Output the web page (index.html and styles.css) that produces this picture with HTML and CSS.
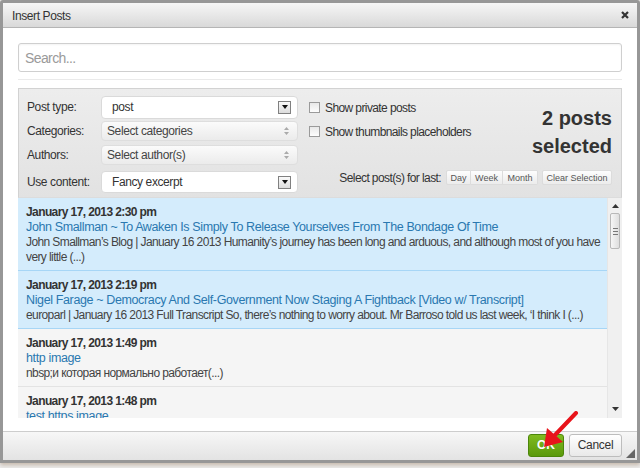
FILE: index.html
```html
<!DOCTYPE html>
<html lang="en">
<head>
  <meta charset="UTF-8">
  <title>Insert Posts</title>
  <link rel="stylesheet" href="styles.css">
</head>
<body>
  <div class="dialog">
    <div class="titlebar">
      <span class="title">Insert Posts</span>
      <svg class="close" width="8" height="8" viewBox="0 0 8 8"><path d="M1 1 L7 7 M7 1 L1 7" stroke="#333" stroke-width="2.2"/></svg>
    </div>

    <div class="content">
      <input class="search" type="text" placeholder="Search...">
      <div class="divider"></div>

      <!-- 筛选面板 -->
      <div class="filters">
        <div class="fields">
          <div class="field">
            <label>Post type:</label>
            <div class="select select-native">
              <span>post</span>
              <span class="drop-btn"><svg width="6" height="4" viewBox="0 0 6 4"><path d="M0 0 H6 L3 4 Z" fill="#111"/></svg></span>
            </div>
          </div>
          <div class="field">
            <label>Categories:</label>
            <div class="select select-chosen">
              <span>Select categories</span>
              <svg width="5" height="8" viewBox="0 0 5 8"><path d="M0 3 L2.5 0 L5 3 Z M0 5 L2.5 8 L5 5 Z" fill="#aaa"/></svg>
            </div>
          </div>
          <div class="field">
            <label>Authors:</label>
            <div class="select select-chosen">
              <span>Select author(s)</span>
              <svg width="5" height="8" viewBox="0 0 5 8"><path d="M0 3 L2.5 0 L5 3 Z M0 5 L2.5 8 L5 5 Z" fill="#aaa"/></svg>
            </div>
          </div>
          <div class="field field-last">
            <label>Use content:</label>
            <div class="select select-native select-tall">
              <span>Fancy excerpt</span>
              <span class="drop-btn"><svg width="6" height="4" viewBox="0 0 6 4"><path d="M0 0 H6 L3 4 Z" fill="#111"/></svg></span>
            </div>
          </div>
        </div>

        <div class="side">
          <div class="side-top">
            <div class="options">
              <div class="check"><span class="box"></span>Show private posts</div>
              <div class="check"><span class="box"></span>Show thumbnails placeholders</div>
            </div>
            <div class="count">2 posts<br>selected</div>
          </div>
          <div class="range">
            <span class="range-label">Select post(s) for last:</span>
            <div class="btn-group">
              <button>Day</button><button>Week</button><button>Month</button>
            </div>
            <button class="btn-clear">Clear Selection</button>
          </div>
        </div>
      </div>

      <!-- 文章列表 -->
      <div class="posts">
        <div class="post-list">
          <div class="post selected">
            <div class="post-date">January 17, 2013 2:30 pm</div>
            <div class="post-title">John Smallman ~ To Awaken Is Simply To Release Yourselves From The Bondage Of Time</div>
            <div class="post-excerpt">John Smallman’s Blog | January 16 2013 Humanity’s journey has been long and arduous, and although most of you have very little (...)</div>
          </div>
          <div class="post selected">
            <div class="post-date">January 17, 2013 2:19 pm</div>
            <div class="post-title">Nigel Farage ~ Democracy And Self-Government Now Staging A Fightback [Video w/ Transcript]</div>
            <div class="post-excerpt">europarl | January 16 2013 Full Transcript So, there’s nothing to worry about. Mr Barroso told us last week, ‘I think I (...)</div>
          </div>
          <div class="post">
            <div class="post-date">January 17, 2013 1:49 pm</div>
            <div class="post-title">http image</div>
            <div class="post-excerpt">nbsp;и которая нормально работает(...)</div>
          </div>
          <div class="post">
            <div class="post-date">January 17, 2013 1:48 pm</div>
            <div class="post-title">test https image</div>
            <div class="post-excerpt">nbsp;(...)</div>
          </div>
        </div>
        <div class="scrollbar">
          <svg class="arrow-up" width="7" height="4" viewBox="0 0 7 4"><path d="M0 4 L3.5 0 L7 4 Z" fill="#333"/></svg>
          <div class="thumb"><span></span><span></span><span></span></div>
          <div class="track"></div>
          <svg class="arrow-down" width="7" height="4" viewBox="0 0 7 4"><path d="M0 0 L3.5 4 L7 0 Z" fill="#333"/></svg>
        </div>
      </div>
    </div>

    <div class="footer">
      <button class="btn-ok">OK</button>
      <button class="btn-cancel">Cancel</button>
      <svg class="grip" width="9" height="9" viewBox="0 0 9 9"><path d="M9 0 V9 H0 Z" fill="#666"/></svg>
    </div>
  </div>

  <!-- 红色箭头标注 -->
  <svg class="pointer" width="44" height="44" viewBox="0 0 44 44">
    <path d="M36 2 L15 24" stroke="#e8141b" stroke-width="4" stroke-linecap="round"/>
    <path d="M4 36 L7 17 L23 31 Z" fill="#e8141b"/>
  </svg>
</body>
</html>
```

FILE: styles.css
```css
/* 基础样式 */
* {
  box-sizing: border-box;
  margin: 0;
  padding: 0;
}

body {
  font-family: 'Liberation Sans', Arial, sans-serif;
  font-size: 12px;
  color: #333;
  background-color: #ececec;
  width: 640px;
  height: 468px;
  overflow: hidden;
}

/* 对话框 */
.dialog {
  width: 640px;
  height: 463px;
  display: flex;
  flex-direction: column;
  background-color: #fff;
  border: 3px solid #979797;
  border-radius: 3px 3px 0 0;
  box-shadow: 0 2px 4px rgba(120, 80, 40, 0.35);
}

.titlebar {
  height: 25px;
  flex: 0 0 25px;
  display: flex;
  align-items: center;
  justify-content: space-between;
  padding: 0 8px 0 9px;
  background: linear-gradient(#f6f6f6, #d9d9d9);
  border-bottom: 1px solid #b5b5b5;
}

.title {
  font-size: 12px;
  letter-spacing: -0.4px;
  color: #333;
  padding-top: 2px;
}

.close {
  display: block;
}

.content {
  flex: 1;
  padding: 15px 15px 0;
  display: flex;
  flex-direction: column;
}

.search {
  height: 29px;
  flex: 0 0 29px;
  border: 1px solid #cfcfcf;
  border-radius: 3px;
  padding: 0 6px;
  font-family: inherit;
  font-size: 14px;
  letter-spacing: -0.6px;
  color: #333;
  box-shadow: inset 0 1px 2px rgba(0, 0, 0, 0.05);
}

.search::placeholder {
  color: #9a9a9a;
}

.divider {
  height: 1px;
  margin-top: 7px;
  background-color: #eaeaea;
}

/* 筛选面板 */
.filters {
  margin-top: 8px;
  height: 110px;
  flex: 0 0 110px;
  display: flex;
  background: linear-gradient(#ededed, #e2e2e2);
  border: 1px solid #d2d2d2;
  border-bottom-color: #dcdcdc;
  padding: 6px 9px 0 8px;
  white-space: nowrap;
}

.fields {
  flex: 0 0 271px;
}

.field {
  display: flex;
  align-items: center;
  height: 24px;
}

.field-last {
  margin-top: 3px;
}

.field label {
  width: 74px;
  color: #333;
  letter-spacing: -0.4px;
}

.select {
  width: 197px;
  display: flex;
  align-items: center;
  justify-content: space-between;
  border-radius: 4px;
  letter-spacing: -0.4px;
}

.select-native {
  height: 23px;
  padding: 0 6px 0 10px;
  background-color: #fff;
  border: 1px solid #dadada;
}

.select-tall {
  height: 22px;
}

.drop-btn {
  width: 13px;
  height: 13px;
  display: flex;
  align-items: center;
  justify-content: center;
  border: 1px solid #808080;
  background: linear-gradient(#fafafa, #dcdcdc);
}

.select-chosen {
  height: 20px;
  padding: 0 8px 0 5px;
  background: linear-gradient(#fbfbfb, #ebebeb);
  border: 1px solid #dedede;
  color: #444;
}

.side {
  flex: 1;
  min-width: 0;
  display: flex;
  flex-direction: column;
  padding-left: 11px;
}

.side-top {
  display: flex;
  justify-content: space-between;
}

.options {
  padding-top: 1px;
}

.check {
  display: flex;
  align-items: center;
  height: 24px;
  letter-spacing: -0.6px;
}

.box {
  width: 11px;
  height: 11px;
  margin-right: 5px;
  border: 1px solid #9a9a9a;
  background: linear-gradient(#e8e8e8, #fdfdfd);
  margin-top: -2px;
}

.count {
  font-size: 20px;
  font-weight: bold;
  line-height: 28px;
  text-align: right;
  color: #333;
  margin-top: 9px;
}

.range {
  display: flex;
  align-items: center;
  justify-content: flex-end;
  margin-top: 10px;
}

.range-label {
  font-size: 12px;
  letter-spacing: -0.6px;
  margin-right: 5px;
}

.btn-group {
  display: flex;
}

.range button {
  height: 15px;
  padding: 0;
  font-family: inherit;
  font-size: 9px;
  color: #555;
  background: linear-gradient(#fdfdfd, #ececec);
  border: 1px solid #dcdcdc;
  border-radius: 2px;
}

.btn-group button {
  border-radius: 0;
  border-left-width: 0;
}

.btn-group button:first-child {
  border-left-width: 1px;
  border-radius: 2px 0 0 2px;
}

.btn-group button:last-child {
  border-radius: 0 2px 2px 0;
}

.btn-group button:nth-child(1) { width: 25px; }
.btn-group button:nth-child(2) { width: 32px; }
.btn-group button:nth-child(3) { width: 35px; }

.range .btn-clear {
  margin-left: 4px;
  width: 70px;
}

/* 文章列表 */
.posts {
  height: 220px;
  flex: 0 0 220px;
  display: flex;
  overflow: hidden;
}

.post-list {
  flex: 1;
  overflow: hidden;
  background-color: #f5f5f5;
}

.post {
  padding: 7px 0 5px 8px;
  line-height: 15px;
  background-color: #f5f5f5;
  border-bottom: 1px solid #e3e3e3;
}

.post.selected {
  background-color: #d4ecfc;
  border-bottom-color: #a7d6f6;
}

.post-date {
  font-weight: bold;
  color: #333;
  letter-spacing: -0.6px;
}

.post-title {
  font-size: 12.5px;
  color: #2a78b0;
  letter-spacing: -0.37px;
}

.post-excerpt {
  color: #444;
  letter-spacing: -0.6px;
}

.scrollbar {
  width: 15px;
  display: flex;
  flex-direction: column;
  align-items: center;
  background-color: #f0f0f0;
  border-left: 1px solid #e6e6e6;
}

.arrow-up {
  margin-top: 6px;
}

.thumb {
  width: 10px;
  height: 36px;
  margin-top: 5px;
  display: flex;
  flex-direction: column;
  align-items: center;
  justify-content: center;
  gap: 2px;
  background: linear-gradient(90deg, #f6f6f6, #dedede);
  border: 1px solid #b8b8b8;
  border-radius: 2px;
}

.thumb span {
  width: 5px;
  height: 1px;
  background-color: #777;
}

.track {
  flex: 1;
}

.arrow-down {
  margin-bottom: 7px;
}

/* 底部按钮 */
.footer {
  position: relative;
  margin-top: 13px;
  flex: 1;
  display: flex;
  align-items: center;
  justify-content: flex-end;
  gap: 5px;
  padding: 0 15px 2px 0;
  background: linear-gradient(#f7f7f7, #e3e3e3);
  border-top: 1px solid #cdcdcd;
}

.footer button {
  height: 23px;
  border-radius: 3px;
  font-family: inherit;
  font-size: 12px;
}

.btn-ok {
  width: 36px;
  color: #fff;
  font-weight: bold;
  background: linear-gradient(#80bb20, #5a990b);
  border: 1px solid #4c860a;
}

.btn-cancel {
  width: 53px;
  color: #333;
  background: linear-gradient(#ffffff, #e9e9e9);
  border: 1px solid #bdbdbd;
  letter-spacing: -0.3px;
}

.grip {
  position: absolute;
  right: 2px;
  bottom: 2px;
}

/* 标注箭头 */
.pointer {
  position: absolute;
  left: 540px;
  top: 411px;
}
```
